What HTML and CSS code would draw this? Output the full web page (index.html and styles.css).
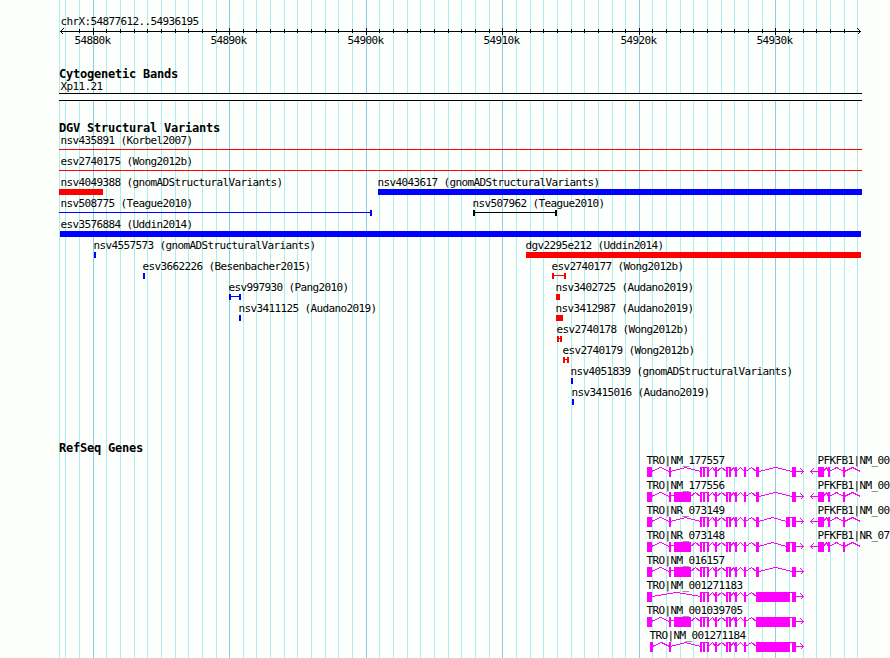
FILE: index.html
```html
<!DOCTYPE html>
<html lang="en">

<head>
    <meta charset="UTF-8">
    <title>chrX:54877612..54936195</title>
    <link rel="stylesheet" href="styles.css">
</head>

<body>
    <div class="browser">
        <svg class="grid" id="grid" width="890" height="658"></svg>
        <svg class="panel" id="ruler" width="890" height="64"></svg>
        <section class="track">
            <h2>Cytogenetic Bands</h2>
            <svg class="panel" id="bands" width="890" height="36"></svg>
        </section>
        <section class="track">
            <h2>DGV Structural Variants</h2>
            <svg class="panel" id="variants" width="890" height="302"></svg>
        </section>
        <section class="track">
            <h2>RefSeq Genes</h2>
            <svg class="panel" id="genes" width="890" height="202"></svg>
        </section>
    </div>
    <script src="script.js"></script>
</body>

</html>
```

FILE: styles.css
```css
body {
    margin: 0;
    background-color: #fdfffc;
    color: #000;
    font-family: "DejaVu Sans Mono", monospace;
}

.browser {
    position: relative;
    width: 890px;
    height: 658px;
    overflow: hidden;
}

/* vertical lines behind all the tracks */
.grid {
    position: absolute;
    top: 0;
    left: 0;
}

.panel {
    display: block;
    position: relative;
    overflow: visible;
}

.track h2 {
    position: relative;
    height: 18px;
    margin: 0;
    padding-left: 59px;
    font-size: 12px;
    line-height: 20px;
    letter-spacing: -0.22px;
}

.label {
    font-size: 11px;
    letter-spacing: -0.622px;
    white-space: pre;
}

rect,
polyline {
    shape-rendering: crispEdges;
}

polyline {
    fill: none;
    stroke-width: 1;
    stroke-linejoin: bevel;
}

.minor {
    fill: #afeeee;
}

.major {
    fill: #87ceeb;
}

.paper {
    fill: #fdfffc;
}

.black {
    fill: #000;
}

.red {
    fill: #f00;
}

.blue {
    fill: #00f;
}

.gene {
    fill: #f0f;
}

.intron {
    stroke: #f0f;
}

.axis {
    stroke: #000;
}
```

FILE: script.js
```js
var NS = "http://www.w3.org/2000/svg";
var START = 54877.612;
var SCALE = 800 / 58.584;

function add(id, tag, attrs) {
    var el = document.createElementNS(NS, tag);
    for (var key in attrs) {
        el.setAttribute(key, attrs[key]);
    }
    document.getElementById(id).appendChild(el);
    return el;
}

function rect(id, x, y, w, h, color) {
    add(id, "rect", { x: x, y: y, width: w, height: h, "class": color });
}

function label(id, x, y, text) {
    add(id, "text", { x: x - 0.4, y: y, "class": "label" }).textContent = text;
}

// points are pixel indexes, move them to the pixel centres
function line(id, points, color) {
    var list = points.map(function (p) {
        return (p[0] + 0.5) + "," + (p[1] + 0.5);
    });
    add(id, "polyline", { points: list.join(" "), "class": color });
}

// grid and ruler
rect("grid", 59, 0, 1, 658, "minor");
rect("ruler", 60, 31, 801, 1, "black");
label("ruler", 61, 25, "chrX:54877612..54936195");
for (var k = 54878; k <= 54936; k++) {
    var x = Math.round(60 + (k - START) * SCALE);
    if (k % 10 == 0) {
        rect("grid", x, 0, 1, 658, "major");
        rect("ruler", x, 28, 1, 7, "black");
        label("ruler", x - 18, 44, k + "k");
    } else {
        rect("grid", x, 0, 1, 658, "minor");
        // no tick under the arrow heads
        if (x > 70 && x < 850) {
            rect("ruler", x, 29, 1, 4, "black");
        }
    }
}
line("ruler", [[63, 28], [60, 31], [63, 34]], "axis");
line("ruler", [[857, 28], [860, 31], [857, 34]], "axis");

// cytogenetic band
label("bands", 61, 8, "Xp11.21");
rect("bands", 59, 11, 803, 8, "black");
rect("bands", 59, 12, 803, 6, "paper");

// row, start, end, color, shape, name
var variants = [
    [0, 59, 862, "red", "line", "nsv435891 (Korbel2007)"],
    [1, 59, 862, "red", "line", "esv2740175 (Wong2012b)"],
    [2, 59, 103, "red", "bar", "nsv4049388 (gnomADStructuralVariants)"],
    [2, 378, 862, "blue", "bar", "nsv4043617 (gnomADStructuralVariants)"],
    [3, 59, 372, "blue", "right", "nsv508775 (Teague2010)"],
    [3, 473, 557, "black", "span", "nsv507962 (Teague2010)"],
    [4, 60, 861, "blue", "bar", "esv3576884 (Uddin2014)"],
    [5, 94, 96, "blue", "bar", "nsv4557573 (gnomADStructuralVariants)"],
    [5, 526, 861, "red", "bar", "dgv2295e212 (Uddin2014)"],
    [6, 143, 145, "blue", "bar", "esv3662226 (Besenbacher2015)"],
    [6, 552, 566, "red", "span", "esv2740177 (Wong2012b)"],
    [7, 229, 241, "blue", "span", "esv997930 (Pang2010)"],
    [7, 556, 560, "red", "bar", "nsv3402725 (Audano2019)"],
    [8, 239, 241, "blue", "bar", "nsv3411125 (Audano2019)"],
    [8, 556, 563, "red", "bar", "nsv3412987 (Audano2019)"],
    [9, 557, 562, "red", "span", "esv2740178 (Wong2012b)"],
    [10, 563, 569, "red", "span", "esv2740179 (Wong2012b)"],
    [11, 571, 573, "blue", "bar", "nsv4051839 (gnomADStructuralVariants)"],
    [12, 572, 574, "blue", "bar", "nsv3415016 (Audano2019)"]
];

variants.forEach(function (v) {
    var base = 8 + v[0] * 21;
    var from = v[1], to = v[2], color = v[3], shape = v[4];
    label("variants", Math.max(from, 61), base, v[5]);
    if (shape == "bar") {
        rect("variants", from, base + 3, to - from, 6, color);
        return;
    }
    rect("variants", from, base + 5, to - from, 1, color);
    if (shape == "span") {
        rect("variants", from, base + 3, 2, 6, color);
    }
    if (shape != "line") {
        rect("variants", to - 2, base + 3, 2, 6, color);
    }
});

// genes: exons as [start, end]
var middle = [[700, 702], [703, 705], [707, 709], [715, 717], [726, 728],
    [729, 731], [735, 737], [744, 746]];
var first = [[647, 652]];
var second = [[669, 671]];
var third = [[674, 691]];
var shortEnd = [[756, 759], [792, 796]];
var splitEnd = [[756, 759], [786, 790], [792, 796]];
var longEnd = [[756, 790], [792, 796]];

var genes = [
    ["TRO|NM_177557", first.concat(second, middle, shortEnd)],
    ["TRO|NM_177556", first.concat(second, third, middle, shortEnd)],
    ["TRO|NR_073149", first.concat(second, middle, splitEnd)],
    ["TRO|NR_073148", first.concat(second, third, middle, splitEnd)],
    ["TRO|NM_016157", first.concat(second, third, middle, shortEnd)],
    ["TRO|NM_001271183", first.concat(middle, longEnd)],
    ["TRO|NM_001039705", first.concat(second, third, middle, longEnd)],
    ["TRO|NM_001271184", [[650, 653]].concat(second, middle, longEnd)]
];

function drawExons(exons, y) {
    exons.forEach(function (e, i) {
        if (i > 0) {
            var a = exons[i - 1][1], b = e[0];
            if (b - a <= 3) {
                // no room for a peak
                rect("genes", a, b - a == 3 ? y - 1 : y - 4, b - a, 1, "gene");
            } else {
                line("genes", [[a - 1, y], [Math.floor((a + b) / 2), y - 4], [b, y]], "intron");
            }
        }
        rect("genes", e[0], y - 4, e[1] - e[0], 10, "gene");
    });
}

genes.forEach(function (g, i) {
    var y = 15 + i * 25;
    label("genes", g[1][0][0], y - 7, g[0]);
    drawExons(g[1], y);
    rect("genes", 796, y, 8, 1, "gene");
    line("genes", [[800, y - 3], [803, y], [800, y + 3]], "intron");
});

["PFKFB1|NM_00", "PFKFB1|NM_00", "PFKFB1|NM_00", "PFKFB1|NR_07"].forEach(function (name, i) {
    var y = 15 + i * 25;
    label("genes", 818, y - 7, name);
    drawExons([[818, 824], [828, 830], [843, 845]], y);
    line("genes", [[844, y], [852, y - 4], [860, y]], "intron");
    rect("genes", 810, y, 8, 1, "gene");
    line("genes", [[813, y - 3], [810, y], [813, y + 3]], "intron");
});
```
